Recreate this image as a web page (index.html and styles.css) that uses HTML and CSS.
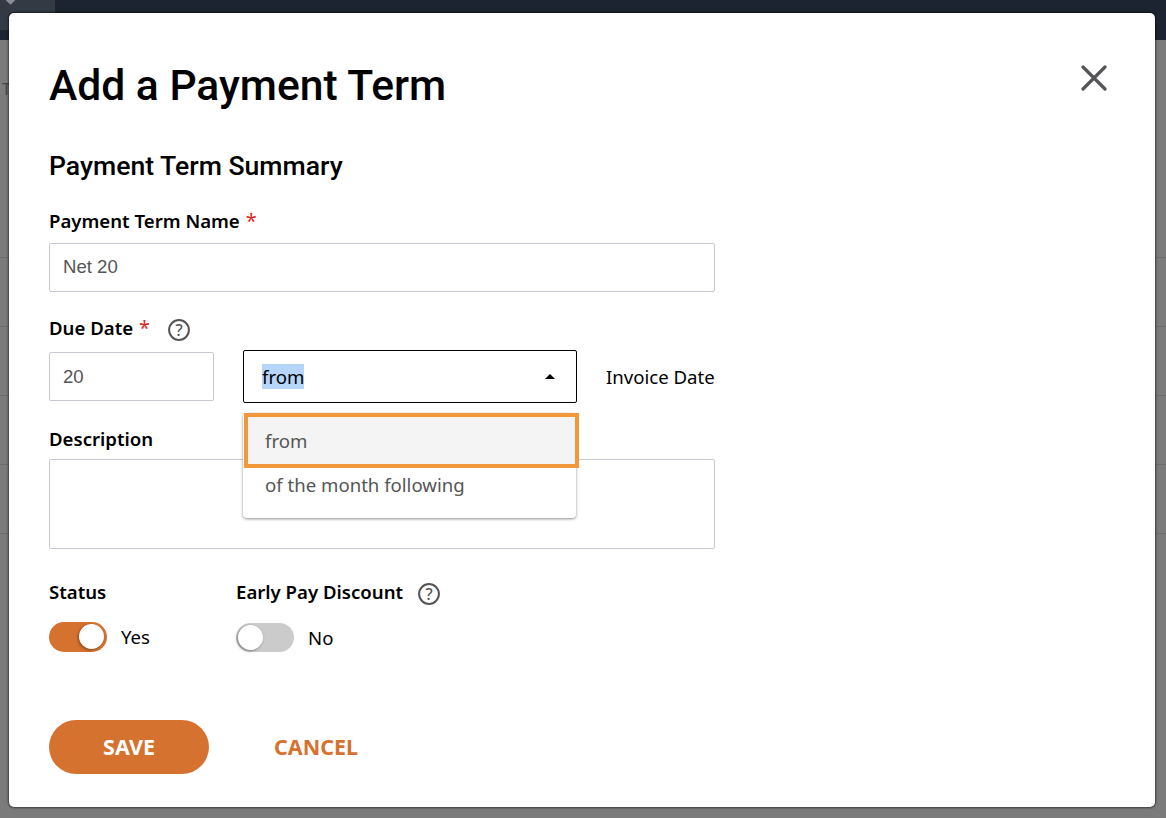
FILE: index.html
```html
<!DOCTYPE html>
<html lang="en">
<head>
  <meta charset="UTF-8">
  <meta name="viewport" content="width=device-width, initial-scale=1.0">
  <title>Add a Payment Term</title>
  <link rel="stylesheet" href="styles.css">
</head>
<body>
  <!-- page behind the modal -->
  <div class="backdrop">
    <div class="topbar"><div class="topbar-tab"><span class="tab-mark"></span></div></div>
    <div class="page-letter">T</div>
    <div class="page-rows">
      <div class="page-row"></div>
      <div class="page-row"></div>
      <div class="page-row"></div>
      <div class="page-row"></div>
      <div class="page-row"></div>
    </div>
  </div>

  <div class="modal">
    <button class="close-btn" aria-label="Close">
      <svg width="26" height="26" viewBox="0 0 26 26"><path d="M2 2 L24 24 M24 2 L2 24" stroke="#555558" stroke-width="3.2" stroke-linecap="round" fill="none"/></svg>
    </button>

    <h1>Add a Payment Term</h1>
    <h2>Payment Term Summary</h2>

    <div class="form">
      <div class="form-group name-group">
        <label class="field-label">Payment Term Name <span class="req">*</span></label>
        <div class="input">Net 20</div>
      </div>

      <div class="form-group due-group">
        <label class="field-label">Due Date <span class="req">*</span>
          <svg class="help" width="22" height="22" viewBox="0 0 22 22"><circle cx="11" cy="11" r="9.9" fill="none" stroke="#555" stroke-width="2"/><text x="11" y="16.5" text-anchor="middle" class="help-mark">?</text></svg>
        </label>
        <div class="due-row">
          <div class="input due-days">20</div>
          <div class="select-wrap">
            <div class="select"><span class="selected-text">from</span><span class="caret"></span></div>
            <ul class="menu">
              <li class="menu-item active">from</li>
              <li class="menu-item">of the month following</li>
            </ul>
          </div>
          <span class="due-suffix">Invoice Date</span>
        </div>
      </div>

      <div class="form-group desc-group">
        <label class="field-label">Description</label>
        <div class="input textarea"></div>
      </div>

      <div class="toggles">
        <div class="toggle-group status-group">
          <label class="field-label">Status</label>
          <div class="toggle-row">
            <span class="switch on"><span class="knob"></span></span>
            <span class="toggle-text yes-text">Yes</span>
          </div>
        </div>
        <div class="toggle-group">
          <label class="field-label">Early Pay Discount
            <svg class="help help-tight" width="22" height="22" viewBox="0 0 22 22"><circle cx="11" cy="11" r="9.9" fill="none" stroke="#555" stroke-width="2"/><text x="11" y="16.5" text-anchor="middle" class="help-mark">?</text></svg>
          </label>
          <div class="toggle-row off-row">
            <span class="switch"><span class="knob"></span></span>
            <span class="toggle-text">No</span>
          </div>
        </div>
      </div>
    </div>

    <div class="actions">
      <button class="btn-save">SAVE</button>
      <button class="btn-cancel">CANCEL</button>
    </div>
  </div>
</body>
</html>
```

FILE: styles.css
```css
* {
  margin: 0;
  padding: 0;
  box-sizing: border-box;
}

body {
  width: 1166px;
  height: 818px;
  overflow: hidden;
  position: relative;
  background: #7b7b7b;
  font-family: "Noto Sans", sans-serif;
  color: #000;
}

.backdrop {
  position: absolute;
  inset: 0;
}

.topbar {
  height: 40px;
  background: #1b2430;
}

.topbar-tab {
  position: relative;
  width: 55px;
  height: 30px;
  background: #333a44;
  overflow: hidden;
}

.tab-mark {
  position: absolute;
  left: 6px;
  top: -6px;
  width: 9px;
  height: 9px;
  background: #8a8f96;
  transform: rotate(45deg);
}

.page-letter {
  position: absolute;
  left: 2px;
  top: 78px;
  font-size: 16px;
  color: #444;
}

.page-rows {
  margin-top: 217px;
}

.page-row {
  height: 69px;
  border-top: 1px solid #6c6c6c;
}

.modal {
  position: absolute;
  left: 9px;
  top: 13px;
  width: 1146px;
  height: 794px;
  background: #fff;
  border-radius: 5px;
  padding: 40px;
  box-shadow: 0 0 2px 1px rgba(0, 0, 0, 0.5);
}

.close-btn {
  position: absolute;
  left: 1072px;
  top: 52px;
  width: 26px;
  height: 26px;
  border: none;
  background: none;
}

h1 {
  font-family: Roboto, sans-serif;
  font-size: 42.6px;
  font-weight: 500;
  line-height: 60px;
  margin-top: 2px;
}

h2 {
  font-family: Roboto, sans-serif;
  font-size: 26.6px;
  font-weight: 500;
  line-height: 34px;
  margin-top: 34px;
}

.form {
  width: 666px;
  margin-top: 26px;
}

.field-label {
  display: flex;
  align-items: center;
  gap: 6px;
  height: 24px;
  padding-bottom: 2px;
  font-size: 18.6px;
  font-weight: 600;
}

.req {
  color: #d9291c;
  font-size: 20px;
  font-weight: 400;
}

.help {
  margin-left: 12px;
  margin-top: 6px;
}

.help-tight {
  margin-left: 9px;
}

.help-mark {
  font-family: "Noto Sans", sans-serif;
  font-size: 16px;
  font-weight: 500;
  fill: #555;
}

.input {
  height: 49px;
  border: 1px solid #c9c8d3;
  border-radius: 2px;
  font-family: "Liberation Sans", sans-serif;
  font-size: 18.6px;
  color: #555;
  line-height: 46px;
  padding: 0 13px;
  margin-top: 10px;
}

.due-group {
  margin-top: 24px;
}

.due-row {
  display: flex;
  align-items: center;
  margin-top: 10px;
}

.due-days {
  width: 165px;
  margin-top: 0;
  line-height: 48px;
}

.select-wrap {
  position: relative;
  width: 334px;
  margin-left: 29px;
}

.select {
  height: 53px;
  border: 1px solid #000;
  border-radius: 2px;
  display: flex;
  align-items: center;
  justify-content: space-between;
  padding: 0 21px 0 18px;
  font-size: 18.6px;
}

.selected-text {
  background: #b5d5fb;
  line-height: 25px;
}

.caret {
  width: 0;
  height: 0;
  border-left: 5px solid transparent;
  border-right: 5px solid transparent;
  border-bottom: 5px solid #000;
}

.menu {
  position: absolute;
  left: 0;
  top: 63px;
  width: 333px;
  height: 105px;
  list-style: none;
  background: #fff;
  border-radius: 4px;
  box-shadow: 0 1px 3px rgba(0, 0, 0, 0.45);
  z-index: 2;
}

.menu-item {
  height: 44px;
  line-height: 36px;
  padding-left: 22px;
  font-size: 18.6px;
  color: #555;
}

.menu-item.active {
  position: relative;
  left: 1px;
  width: 335px;
  height: 55px;
  line-height: 47px;
  padding-left: 17px;
  background: #f4f4f4;
  border: 4px solid #f2973a;
  margin-bottom: -1px;
}

.due-suffix {
  font-size: 18.6px;
  margin-left: 29px;
  white-space: nowrap;
}

.desc-group {
  margin-top: 24px;
}

.textarea {
  height: 90px;
  margin-top: 8px;
}

.toggles {
  display: flex;
  margin-top: 31px;
}

.status-group {
  width: 187px;
}

.toggle-row {
  display: flex;
  align-items: center;
  gap: 14px;
  margin-top: 18px;
}

.off-row {
  margin-top: 19px;
}

.switch {
  position: relative;
  width: 58px;
  height: 29px;
  border-radius: 15px;
  background: #cbcbcb;
  display: block;
}

.switch.on {
  height: 30px;
  background: #d6722f;
}

.knob {
  position: absolute;
  left: 2px;
  top: 2px;
  width: 25px;
  height: 25px;
  border-radius: 50%;
  background: #fff;
  box-shadow: -1px 1px 3px rgba(0, 0, 0, 0.4);
}

.switch.on .knob {
  left: 30px;
}

.toggle-text {
  font-size: 18.6px;
}

.yes-text {
  padding-bottom: 2px;
}

.actions {
  display: flex;
  align-items: center;
  margin-top: 68px;
}

.btn-save {
  width: 160px;
  height: 54px;
  border: none;
  border-radius: 27px;
  background: #d6722f;
  color: #fff;
  font-family: "Noto Sans", sans-serif;
  font-size: 21.5px;
  font-weight: 700;
  padding-bottom: 2px;
}

.btn-cancel {
  margin-left: 65px;
  border: none;
  background: none;
  color: #d6722f;
  font-family: "Noto Sans", sans-serif;
  font-size: 21.5px;
  font-weight: 700;
  padding-bottom: 2px;
}
```
